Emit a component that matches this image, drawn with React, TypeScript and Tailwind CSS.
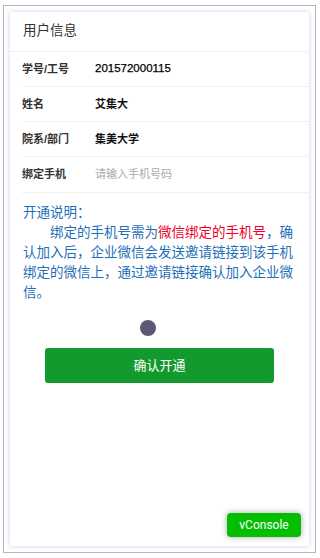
import React from 'react';

const rows = [
  { label: '学号/工号', value: '201572000115', numeric: true },
  { label: '姓名', value: '艾集大', numeric: false },
  { label: '院系/部门', value: '集美大学', numeric: false },
];

const App: React.FC = () => {
  return (
    <div
      className="relative w-[320px] h-[558px] bg-white overflow-hidden"
      style={{ fontFamily: '"Liberation Sans", "Noto Sans CJK SC", sans-serif' }}
    >
      <div className="ml-[3px] mt-[5px] w-[313px] h-[548px] border border-[#b4b4c4] bg-white pl-[6px] pt-[6px]">
        <div className="w-[299px] h-[534px] bg-white shadow-[0_0_5px_rgba(130,110,170,0.35)]">
          {/* Header */}
          <div className="h-[40px] flex items-center pl-[13px] text-[13.5px] text-[#333] border-b border-[#f1f1f4]">
            用户信息
          </div>

          {/* Info rows */}
          <div className="pl-[12px]">
            {rows.map((row) => (
              <div
                key={row.label}
                className="h-[35px] flex items-center border-b border-[#f1f1f4] text-[11px]"
              >
                <span className="w-[73px] font-semibold text-[#333]">{row.label}</span>
                <span
                  className={
                    row.numeric
                      ? 'text-[11.5px] text-[#000] [-webkit-text-stroke:0.25px_#000]'
                      : 'font-semibold text-[#111]'
                  }
                >
                  {row.value}
                </span>
              </div>
            ))}
            <div className="h-[36px] flex items-center border-b border-[#f1f1f4] text-[11px]">
              <span className="w-[73px] font-semibold text-[#333]">绑定手机</span>
              <input
                className="flex-1 outline-none bg-transparent text-[11px] text-[#111] placeholder:text-[#a9a9b2]"
                placeholder="请输入手机号码"
              />
            </div>
          </div>

          {/* Explanation */}
          <div className="mt-[10px] pl-[13px] w-[288px] text-[13.5px] leading-[20px] text-[#1f6fb8]">
            <div>开通说明：</div>
            <p className="indent-[2em]">
              绑定的手机号需为<span className="text-[#f0002a]">微信绑定的手机号</span>，确认加入后，企业微信会发送邀请链接到该手机绑定的微信上，通过邀请链接确认加入企业微信。
            </p>
          </div>

          {/* Loading dot */}
          <div className="mt-[17px] ml-[130px] w-[16px] h-[16px] rounded-full bg-[#5d5878]" />

          {/* Confirm button */}
          <div className="mt-[12px] flex justify-center">
            <button className="w-[229px] h-[35px] rounded-[3px] bg-[#139a2e] text-white text-[13px]">
              确认开通
            </button>
          </div>
        </div>
      </div>

      {/* vConsole switch */}
      <button
        className="absolute left-[227px] top-[513px] w-[74px] h-[24px] rounded-[4px] bg-[#04be02] text-white text-[12px] shadow-[0_0_6px_rgba(0,0,0,0.35)]"
        style={{ fontFamily: 'Roboto, sans-serif' }}
      >
        vConsole
      </button>
    </div>
  );
};

export default App;
